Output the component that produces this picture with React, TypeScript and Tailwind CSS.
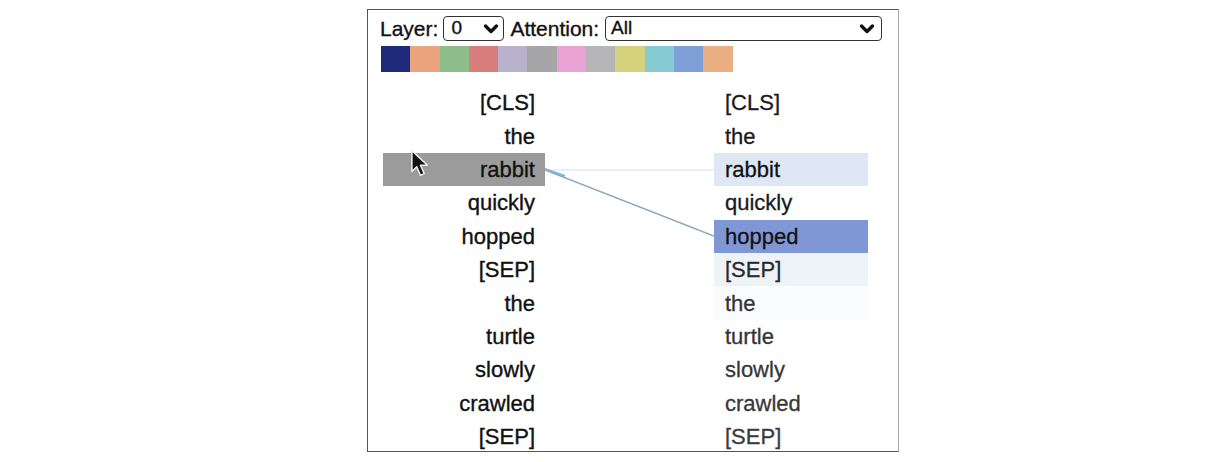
import React from "react";

const swatches = [
  "#1f2a7a",
  "#e9a47e",
  "#8dbd88",
  "#d87d7b",
  "#b8b2cc",
  "#a6a5a7",
  "#e8a2d4",
  "#b5b5b7",
  "#d4d27c",
  "#86cbd3",
  "#7e9fd8",
  "#e9ae82",
];

const tokens = [
  "[CLS]",
  "the",
  "rabbit",
  "quickly",
  "hopped",
  "[SEP]",
  "the",
  "turtle",
  "slowly",
  "crawled",
  "[SEP]",
];

const rightBg = [
  "transparent",
  "transparent",
  "#dfe6f4",
  "transparent",
  "#8097d6",
  "#eef3f8",
  "#fafbfd",
  "transparent",
  "transparent",
  "transparent",
  "transparent",
];

const rightColor = [
  "#1a1a1a",
  "#1a1a1a",
  "#111111",
  "#1a1a1a",
  "#111111",
  "#2a2a2a",
  "#333333",
  "#333333",
  "#383838",
  "#383838",
  "#3a3a3a",
];

function Chevron() {
  return (
    <svg width="16" height="12" viewBox="0 0 16 12">
      <path d="M2.5 3 L8 8.5 L13.5 3" fill="none" stroke="#111" strokeWidth="3.4" strokeLinecap="round" strokeLinejoin="round" />
    </svg>
  );
}

export default function App() {
  return (
    <div className="w-[1207px] h-[462px] bg-white" style={{ fontFamily: "'Liberation Sans', Arial, sans-serif" }}>
      <div className="relative ml-[367px] pt-[9px] w-[532px]">
        <div className="relative border border-[#555] border-r-[#aaa] h-[443px] w-[532px]">
          {/* header */}
          <div className="flex items-center mt-[6px] ml-[12px] h-[25px] text-[21px] text-[#111] [-webkit-text-stroke:0.35px_#111]">
            <span>Layer:</span>
            <div className="ml-[5px] w-[61px] h-[25px] border border-[#333] rounded-[4px] flex items-center justify-between pl-[7px] pr-[4px]">
              <span className="text-[19px]">0</span>
              <Chevron />
            </div>
            <span className="ml-[6px]">Attention:</span>
            <div className="ml-[6px] w-[277px] h-[25px] border border-[#333] rounded-[4px] flex items-center justify-between pl-[5px] pr-[6px]">
              <span className="text-[19px]">All</span>
              <Chevron />
            </div>
          </div>
          {/* swatches */}
          <div className="flex ml-[13px] mt-[5px] h-[26px]">
            {swatches.map((c, i) => (
              <div key={i} className="w-[29.3px] h-[26px]" style={{ backgroundColor: c }} />
            ))}
          </div>
          {/* tokens */}
          <div className="relative flex mt-[14px] ml-[15px]">
            <div className="flex flex-col w-[162px]">
              {tokens.map((t, i) => (
                <div
                  key={i}
                  className={
                    "h-[33.4px] flex items-center justify-end pr-[10px] text-[22px] text-[#111] [-webkit-text-stroke:0.35px_#111] " +
                    (i === 2 ? "bg-[#9b9b9b]" : "")
                  }
                >
                  {t}
                </div>
              ))}
            </div>
            <svg width="169" height="368" className="shrink-0">
              <line x1="0" y1="84" x2="169" y2="84" stroke="#dfe6ee" strokeWidth="2" opacity="0.6" />
              <line x1="0" y1="84" x2="169" y2="150" stroke="#8aa7bf" strokeWidth="1.6" />
              <line x1="0" y1="83" x2="20" y2="90" stroke="#7fb3d9" strokeWidth="2" />
            </svg>
            <div className="flex flex-col w-[154px]">
              {tokens.map((t, i) => (
                <div
                  key={i}
                  className="h-[33.4px] flex items-center pl-[11px] text-[22px] [-webkit-text-stroke:0.3px_currentColor]"
                  style={{ backgroundColor: rightBg[i], color: rightColor[i] }}
                >
                  {t}
                </div>
              ))}
            </div>
          </div>
          {/* cursor */}
          <svg className="absolute left-[42px] top-[139px]" width="22" height="30" viewBox="0 0 20 28">
            <path d="M1.5 1.5 L1.5 21 L6 16.5 L9.5 24.5 L13 23 L9.5 15.2 L16 15.2 Z" fill="#111" stroke="#eee" strokeWidth="1.4" strokeLinejoin="round" />
          </svg>
        </div>
      </div>
    </div>
  );
}
